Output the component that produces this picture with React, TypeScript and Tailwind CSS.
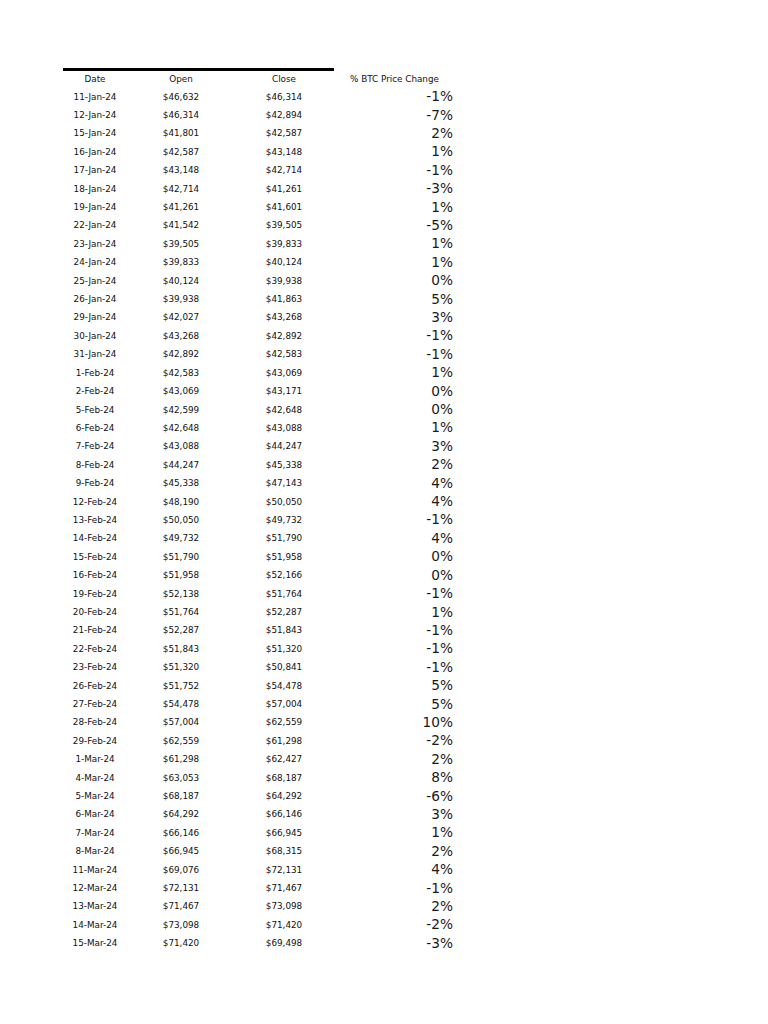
const rows: [string, string, string, string][] = [
  ["11-Jan-24", "$46,632", "$46,314", "-1%"],
  ["12-Jan-24", "$46,314", "$42,894", "-7%"],
  ["15-Jan-24", "$41,801", "$42,587", "2%"],
  ["16-Jan-24", "$42,587", "$43,148", "1%"],
  ["17-Jan-24", "$43,148", "$42,714", "-1%"],
  ["18-Jan-24", "$42,714", "$41,261", "-3%"],
  ["19-Jan-24", "$41,261", "$41,601", "1%"],
  ["22-Jan-24", "$41,542", "$39,505", "-5%"],
  ["23-Jan-24", "$39,505", "$39,833", "1%"],
  ["24-Jan-24", "$39,833", "$40,124", "1%"],
  ["25-Jan-24", "$40,124", "$39,938", "0%"],
  ["26-Jan-24", "$39,938", "$41,863", "5%"],
  ["29-Jan-24", "$42,027", "$43,268", "3%"],
  ["30-Jan-24", "$43,268", "$42,892", "-1%"],
  ["31-Jan-24", "$42,892", "$42,583", "-1%"],
  ["1-Feb-24", "$42,583", "$43,069", "1%"],
  ["2-Feb-24", "$43,069", "$43,171", "0%"],
  ["5-Feb-24", "$42,599", "$42,648", "0%"],
  ["6-Feb-24", "$42,648", "$43,088", "1%"],
  ["7-Feb-24", "$43,088", "$44,247", "3%"],
  ["8-Feb-24", "$44,247", "$45,338", "2%"],
  ["9-Feb-24", "$45,338", "$47,143", "4%"],
  ["12-Feb-24", "$48,190", "$50,050", "4%"],
  ["13-Feb-24", "$50,050", "$49,732", "-1%"],
  ["14-Feb-24", "$49,732", "$51,790", "4%"],
  ["15-Feb-24", "$51,790", "$51,958", "0%"],
  ["16-Feb-24", "$51,958", "$52,166", "0%"],
  ["19-Feb-24", "$52,138", "$51,764", "-1%"],
  ["20-Feb-24", "$51,764", "$52,287", "1%"],
  ["21-Feb-24", "$52,287", "$51,843", "-1%"],
  ["22-Feb-24", "$51,843", "$51,320", "-1%"],
  ["23-Feb-24", "$51,320", "$50,841", "-1%"],
  ["26-Feb-24", "$51,752", "$54,478", "5%"],
  ["27-Feb-24", "$54,478", "$57,004", "5%"],
  ["28-Feb-24", "$57,004", "$62,559", "10%"],
  ["29-Feb-24", "$62,559", "$61,298", "-2%"],
  ["1-Mar-24", "$61,298", "$62,427", "2%"],
  ["4-Mar-24", "$63,053", "$68,187", "8%"],
  ["5-Mar-24", "$68,187", "$64,292", "-6%"],
  ["6-Mar-24", "$64,292", "$66,146", "3%"],
  ["7-Mar-24", "$66,146", "$66,945", "1%"],
  ["8-Mar-24", "$66,945", "$68,315", "2%"],
  ["11-Mar-24", "$69,076", "$72,131", "4%"],
  ["12-Mar-24", "$72,131", "$71,467", "-1%"],
  ["13-Mar-24", "$71,467", "$73,098", "2%"],
  ["14-Mar-24", "$73,098", "$71,420", "-2%"],
  ["15-Mar-24", "$71,420", "$69,498", "-3%"],
];

// A plain spreadsheet export: thick rule over the first three columns, small centred cells,
// and a larger right-aligned percent column.
export default function App() {
  return (
    <div className="min-h-[1024px] w-[768px] bg-white pl-[63px] pt-[68px] font-['DejaVu_Sans',sans-serif] text-[#111]">
      <div className="w-[271px] border-t-[3px] border-black" />
      <div className="flex h-[16px] items-center pt-[1px] text-[8.8px] leading-none">
        <div className="w-[64px] text-center">Date</div>
        <div className="w-[108px] text-center">Open</div>
        <div className="w-[98px] text-center">Close</div>
        <div className="pl-[17px]">% BTC Price Change</div>
      </div>
      <div className="mt-[0.8px]">
        {rows.map(([date, open, close, change]) => (
          <div key={date} className="flex h-[18.42px] items-center text-[8.8px] leading-none">
            <div className="w-[64px] text-center">{date}</div>
            <div className="w-[108px] text-center">{open}</div>
            <div className="w-[98px] text-center">{close}</div>
            <div className="w-[120px] text-right text-[13.7px] text-[#1a1a1a]">{change}</div>
          </div>
        ))}
      </div>
    </div>
  );
}
